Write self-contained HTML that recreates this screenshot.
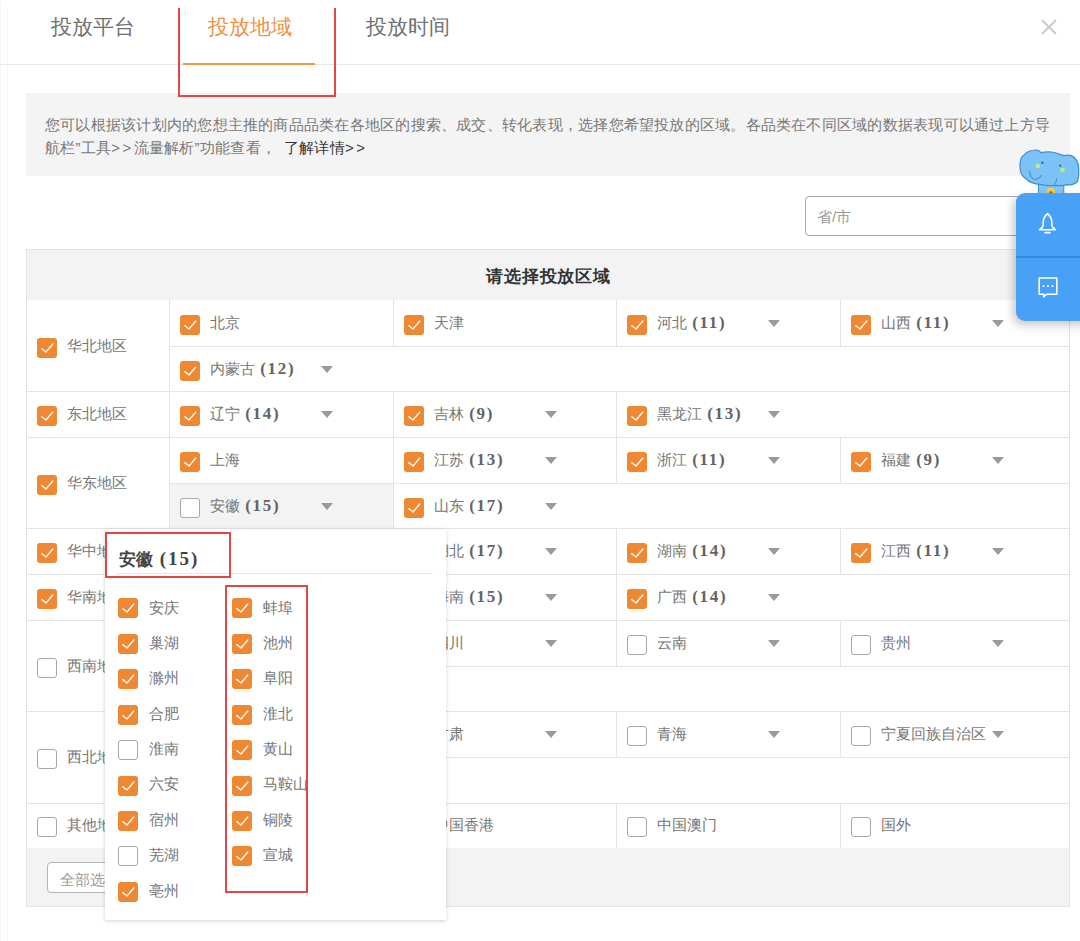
<!DOCTYPE html>
<html><head><meta charset="utf-8">
<style>
*{box-sizing:border-box;margin:0;padding:0}
html,body{width:1080px;height:941px;overflow:hidden;background:#fff}
body{position:relative;font-family:"Liberation Sans",sans-serif;color:#666}
.a{position:absolute}
.tab{position:absolute;top:13px;font-size:21px;line-height:28px;color:#707070;white-space:nowrap}
.hl{position:absolute;background:#e4e4e4;height:1px}
.vl{position:absolute;background:#e4e4e4;width:1px}
.cb{position:absolute;width:20px;height:20px;border-radius:3px;background:#ef8832}
.cb svg{position:absolute;left:0;top:0}
.cb.u{background:#fff;border:1px solid #a8a8a8}
.t{position:absolute;font-size:15px;line-height:20px;color:#767676;white-space:nowrap}
.n{font-family:"Liberation Serif",serif;font-weight:bold;color:#646464;font-size:17px;letter-spacing:1.7px;margin-left:1px}
.ar{position:absolute;width:0;height:0;border-left:6px solid transparent;border-right:6px solid transparent;border-top:7px solid #9a9a9a}
.red{position:absolute;border:2px solid #e04848}
</style></head><body>
<div class="vl" style="left:0;top:0;height:941px;background:#f7f7f7"></div>
<div class="vl" style="left:7px;top:8px;height:933px;background:#f6f6f6"></div>
<!-- tabs -->
<div class="tab" style="left:51px">投放平台</div>
<div class="tab" style="left:208px;color:#f0923e">投放地域</div>
<div class="tab" style="left:366px">投放时间</div>
<svg class="a" style="left:1041px;top:19px" width="16" height="16" viewBox="0 0 16 16"><path d="M1 1L15 15M15 1L1 15" stroke="#c9c9c9" stroke-width="1.8"/></svg>
<div class="hl" style="left:0;top:64px;width:1080px;background:#e8e8e8"></div>
<div class="a" style="left:183px;top:62.5px;width:132px;height:2.5px;background:#f0994a"></div>

<!-- info -->
<div class="a" style="left:26px;top:93px;width:1044px;height:83px;background:#f4f4f4"></div>
<div class="a" style="left:45px;top:113px;font-size:15px;line-height:23px;color:#787878;white-space:nowrap;letter-spacing:0.23px">您可以根据该计划内的您想主推的商品品类在各地区的搜索、成交、转化表现，选择您希望投放的区域。各品类在不同区域的数据表现可以通过上方导</div>
<div class="a" style="left:45px;top:136px;font-size:15px;line-height:23px;color:#787878;white-space:nowrap;letter-spacing:0.23px">航栏”工具<span style="letter-spacing:2.5px">&gt;&gt;</span>流量解析”功能查看，</div>
<div class="a" style="left:284px;top:136px;font-size:15px;line-height:23px;color:#333;white-space:nowrap;letter-spacing:0.23px">了解详情<span style="letter-spacing:2.5px">&gt;&gt;</span></div>
<!-- search -->
<div class="a" style="left:805px;top:196px;width:260px;height:40px;border:1px solid #a9a9a9;border-radius:4px;background:#fff"></div>
<div class="a" style="left:817px;top:207px;font-size:15px;line-height:20px;color:#999">省/市</div>

<!-- table -->
<div class="a" style="left:26px;top:249px;width:1044px;height:658px;border:1px solid #e2e2e2;background:#fff"></div>
<div class="a" style="left:27px;top:250px;width:1042px;height:50px;background:#f3f3f3"></div>
<div class="a" style="left:26px;top:266px;width:1043px;text-align:center;font-size:17px;line-height:22px;font-weight:bold;color:#333;letter-spacing:0.9px;padding-left:2px">请选择投放区域</div>
<div class="a" style="left:27px;top:848px;width:1042px;height:58px;background:#f3f3f3"></div>
<div class="a" style="left:170px;top:484px;width:223px;height:44px;background:#f3f3f3"></div>
<div class="hl" style="left:26px;top:391px;width:1043px"></div>
<div class="cb" style="left:37px;top:338px"><svg width="20" height="20" viewBox="0 0 20 20"><path d="M4.8 10.6L9 14L15.8 6" fill="none" stroke="#fff4ea" stroke-width="1.5" stroke-linecap="round" stroke-linejoin="round"/></svg></div>
<div class="t" style="left:67px;top:336px">华北地区</div>
<div class="vl" style="left:169px;top:300px;height:91px"></div>
<div class="hl" style="left:169px;top:346px;width:900px"></div>
<div class="vl" style="left:393px;top:300px;height:46px"></div>
<div class="vl" style="left:616px;top:300px;height:46px"></div>
<div class="vl" style="left:840px;top:300px;height:46px"></div>
<div class="cb" style="left:180px;top:315px"><svg width="20" height="20" viewBox="0 0 20 20"><path d="M4.8 10.6L9 14L15.8 6" fill="none" stroke="#fff4ea" stroke-width="1.5" stroke-linecap="round" stroke-linejoin="round"/></svg></div>
<div class="t" style="left:210px;top:313px">北京</div>
<div class="cb" style="left:404px;top:315px"><svg width="20" height="20" viewBox="0 0 20 20"><path d="M4.8 10.6L9 14L15.8 6" fill="none" stroke="#fff4ea" stroke-width="1.5" stroke-linecap="round" stroke-linejoin="round"/></svg></div>
<div class="t" style="left:434px;top:313px">天津</div>
<div class="cb" style="left:627px;top:315px"><svg width="20" height="20" viewBox="0 0 20 20"><path d="M4.8 10.6L9 14L15.8 6" fill="none" stroke="#fff4ea" stroke-width="1.5" stroke-linecap="round" stroke-linejoin="round"/></svg></div>
<div class="t" style="left:657px;top:313px">河北 <span class="n">(11)</span></div>
<div class="ar" style="left:768px;top:320px"></div>
<div class="cb" style="left:851px;top:315px"><svg width="20" height="20" viewBox="0 0 20 20"><path d="M4.8 10.6L9 14L15.8 6" fill="none" stroke="#fff4ea" stroke-width="1.5" stroke-linecap="round" stroke-linejoin="round"/></svg></div>
<div class="t" style="left:881px;top:313px">山西 <span class="n">(11)</span></div>
<div class="ar" style="left:992px;top:320px"></div>
<div class="cb" style="left:180px;top:361px"><svg width="20" height="20" viewBox="0 0 20 20"><path d="M4.8 10.6L9 14L15.8 6" fill="none" stroke="#fff4ea" stroke-width="1.5" stroke-linecap="round" stroke-linejoin="round"/></svg></div>
<div class="t" style="left:210px;top:359px">内蒙古 <span class="n">(12)</span></div>
<div class="ar" style="left:321px;top:366px"></div>
<div class="hl" style="left:26px;top:437px;width:1043px"></div>
<div class="cb" style="left:37px;top:406px"><svg width="20" height="20" viewBox="0 0 20 20"><path d="M4.8 10.6L9 14L15.8 6" fill="none" stroke="#fff4ea" stroke-width="1.5" stroke-linecap="round" stroke-linejoin="round"/></svg></div>
<div class="t" style="left:67px;top:404px">东北地区</div>
<div class="vl" style="left:169px;top:391px;height:46px"></div>
<div class="vl" style="left:393px;top:391px;height:46px"></div>
<div class="vl" style="left:616px;top:391px;height:46px"></div>
<div class="cb" style="left:180px;top:406px"><svg width="20" height="20" viewBox="0 0 20 20"><path d="M4.8 10.6L9 14L15.8 6" fill="none" stroke="#fff4ea" stroke-width="1.5" stroke-linecap="round" stroke-linejoin="round"/></svg></div>
<div class="t" style="left:210px;top:404px">辽宁 <span class="n">(14)</span></div>
<div class="ar" style="left:321px;top:411px"></div>
<div class="cb" style="left:404px;top:406px"><svg width="20" height="20" viewBox="0 0 20 20"><path d="M4.8 10.6L9 14L15.8 6" fill="none" stroke="#fff4ea" stroke-width="1.5" stroke-linecap="round" stroke-linejoin="round"/></svg></div>
<div class="t" style="left:434px;top:404px">吉林 <span class="n">(9)</span></div>
<div class="ar" style="left:545px;top:411px"></div>
<div class="cb" style="left:627px;top:406px"><svg width="20" height="20" viewBox="0 0 20 20"><path d="M4.8 10.6L9 14L15.8 6" fill="none" stroke="#fff4ea" stroke-width="1.5" stroke-linecap="round" stroke-linejoin="round"/></svg></div>
<div class="t" style="left:657px;top:404px">黑龙江 <span class="n">(13)</span></div>
<div class="ar" style="left:768px;top:411px"></div>
<div class="hl" style="left:26px;top:528px;width:1043px"></div>
<div class="cb" style="left:37px;top:475px"><svg width="20" height="20" viewBox="0 0 20 20"><path d="M4.8 10.6L9 14L15.8 6" fill="none" stroke="#fff4ea" stroke-width="1.5" stroke-linecap="round" stroke-linejoin="round"/></svg></div>
<div class="t" style="left:67px;top:473px">华东地区</div>
<div class="vl" style="left:169px;top:437px;height:91px"></div>
<div class="hl" style="left:169px;top:483px;width:900px"></div>
<div class="vl" style="left:393px;top:437px;height:46px"></div>
<div class="vl" style="left:616px;top:437px;height:46px"></div>
<div class="vl" style="left:840px;top:437px;height:46px"></div>
<div class="vl" style="left:393px;top:483px;height:45px"></div>
<div class="cb" style="left:180px;top:452px"><svg width="20" height="20" viewBox="0 0 20 20"><path d="M4.8 10.6L9 14L15.8 6" fill="none" stroke="#fff4ea" stroke-width="1.5" stroke-linecap="round" stroke-linejoin="round"/></svg></div>
<div class="t" style="left:210px;top:450px">上海</div>
<div class="cb" style="left:404px;top:452px"><svg width="20" height="20" viewBox="0 0 20 20"><path d="M4.8 10.6L9 14L15.8 6" fill="none" stroke="#fff4ea" stroke-width="1.5" stroke-linecap="round" stroke-linejoin="round"/></svg></div>
<div class="t" style="left:434px;top:450px">江苏 <span class="n">(13)</span></div>
<div class="ar" style="left:545px;top:457px"></div>
<div class="cb" style="left:627px;top:452px"><svg width="20" height="20" viewBox="0 0 20 20"><path d="M4.8 10.6L9 14L15.8 6" fill="none" stroke="#fff4ea" stroke-width="1.5" stroke-linecap="round" stroke-linejoin="round"/></svg></div>
<div class="t" style="left:657px;top:450px">浙江 <span class="n">(11)</span></div>
<div class="ar" style="left:768px;top:457px"></div>
<div class="cb" style="left:851px;top:452px"><svg width="20" height="20" viewBox="0 0 20 20"><path d="M4.8 10.6L9 14L15.8 6" fill="none" stroke="#fff4ea" stroke-width="1.5" stroke-linecap="round" stroke-linejoin="round"/></svg></div>
<div class="t" style="left:881px;top:450px">福建 <span class="n">(9)</span></div>
<div class="ar" style="left:992px;top:457px"></div>
<div class="cb u" style="left:180px;top:498px"></div>
<div class="t" style="left:210px;top:496px">安徽 <span class="n">(15)</span></div>
<div class="ar" style="left:321px;top:503px"></div>
<div class="cb" style="left:404px;top:498px"><svg width="20" height="20" viewBox="0 0 20 20"><path d="M4.8 10.6L9 14L15.8 6" fill="none" stroke="#fff4ea" stroke-width="1.5" stroke-linecap="round" stroke-linejoin="round"/></svg></div>
<div class="t" style="left:434px;top:496px">山东 <span class="n">(17)</span></div>
<div class="ar" style="left:545px;top:503px"></div>
<div class="hl" style="left:26px;top:574px;width:1043px"></div>
<div class="cb" style="left:37px;top:543px"><svg width="20" height="20" viewBox="0 0 20 20"><path d="M4.8 10.6L9 14L15.8 6" fill="none" stroke="#fff4ea" stroke-width="1.5" stroke-linecap="round" stroke-linejoin="round"/></svg></div>
<div class="t" style="left:67px;top:541px">华中地区</div>
<div class="vl" style="left:169px;top:528px;height:46px"></div>
<div class="vl" style="left:393px;top:528px;height:46px"></div>
<div class="vl" style="left:616px;top:528px;height:46px"></div>
<div class="vl" style="left:840px;top:528px;height:46px"></div>
<div class="cb" style="left:404px;top:543px"><svg width="20" height="20" viewBox="0 0 20 20"><path d="M4.8 10.6L9 14L15.8 6" fill="none" stroke="#fff4ea" stroke-width="1.5" stroke-linecap="round" stroke-linejoin="round"/></svg></div>
<div class="t" style="left:434px;top:541px">湖北 <span class="n">(17)</span></div>
<div class="ar" style="left:545px;top:548px"></div>
<div class="cb" style="left:627px;top:543px"><svg width="20" height="20" viewBox="0 0 20 20"><path d="M4.8 10.6L9 14L15.8 6" fill="none" stroke="#fff4ea" stroke-width="1.5" stroke-linecap="round" stroke-linejoin="round"/></svg></div>
<div class="t" style="left:657px;top:541px">湖南 <span class="n">(14)</span></div>
<div class="ar" style="left:768px;top:548px"></div>
<div class="cb" style="left:851px;top:543px"><svg width="20" height="20" viewBox="0 0 20 20"><path d="M4.8 10.6L9 14L15.8 6" fill="none" stroke="#fff4ea" stroke-width="1.5" stroke-linecap="round" stroke-linejoin="round"/></svg></div>
<div class="t" style="left:881px;top:541px">江西 <span class="n">(11)</span></div>
<div class="ar" style="left:992px;top:548px"></div>
<div class="hl" style="left:26px;top:620px;width:1043px"></div>
<div class="cb" style="left:37px;top:589px"><svg width="20" height="20" viewBox="0 0 20 20"><path d="M4.8 10.6L9 14L15.8 6" fill="none" stroke="#fff4ea" stroke-width="1.5" stroke-linecap="round" stroke-linejoin="round"/></svg></div>
<div class="t" style="left:67px;top:587px">华南地区</div>
<div class="vl" style="left:169px;top:574px;height:46px"></div>
<div class="vl" style="left:393px;top:574px;height:46px"></div>
<div class="vl" style="left:616px;top:574px;height:46px"></div>
<div class="cb" style="left:404px;top:589px"><svg width="20" height="20" viewBox="0 0 20 20"><path d="M4.8 10.6L9 14L15.8 6" fill="none" stroke="#fff4ea" stroke-width="1.5" stroke-linecap="round" stroke-linejoin="round"/></svg></div>
<div class="t" style="left:434px;top:587px">海南 <span class="n">(15)</span></div>
<div class="ar" style="left:545px;top:594px"></div>
<div class="cb" style="left:627px;top:589px"><svg width="20" height="20" viewBox="0 0 20 20"><path d="M4.8 10.6L9 14L15.8 6" fill="none" stroke="#fff4ea" stroke-width="1.5" stroke-linecap="round" stroke-linejoin="round"/></svg></div>
<div class="t" style="left:657px;top:587px">广西 <span class="n">(14)</span></div>
<div class="ar" style="left:768px;top:594px"></div>
<div class="hl" style="left:26px;top:711px;width:1043px"></div>
<div class="cb u" style="left:37px;top:658px"></div>
<div class="t" style="left:67px;top:656px">西南地区</div>
<div class="vl" style="left:169px;top:620px;height:91px"></div>
<div class="hl" style="left:169px;top:666px;width:900px"></div>
<div class="vl" style="left:393px;top:620px;height:46px"></div>
<div class="vl" style="left:616px;top:620px;height:46px"></div>
<div class="vl" style="left:840px;top:620px;height:46px"></div>
<div class="cb u" style="left:404px;top:635px"></div>
<div class="t" style="left:434px;top:633px">四川</div>
<div class="ar" style="left:545px;top:640px"></div>
<div class="cb u" style="left:627px;top:635px"></div>
<div class="t" style="left:657px;top:633px">云南</div>
<div class="ar" style="left:768px;top:640px"></div>
<div class="cb u" style="left:851px;top:635px"></div>
<div class="t" style="left:881px;top:633px">贵州</div>
<div class="ar" style="left:992px;top:640px"></div>
<div class="hl" style="left:26px;top:803px;width:1043px"></div>
<div class="cb u" style="left:37px;top:749px"></div>
<div class="t" style="left:67px;top:747px">西北地区</div>
<div class="vl" style="left:169px;top:711px;height:92px"></div>
<div class="hl" style="left:169px;top:757px;width:900px"></div>
<div class="vl" style="left:393px;top:711px;height:46px"></div>
<div class="vl" style="left:616px;top:711px;height:46px"></div>
<div class="vl" style="left:840px;top:711px;height:46px"></div>
<div class="cb u" style="left:404px;top:726px"></div>
<div class="t" style="left:434px;top:724px">甘肃</div>
<div class="ar" style="left:545px;top:731px"></div>
<div class="cb u" style="left:627px;top:726px"></div>
<div class="t" style="left:657px;top:724px">青海</div>
<div class="ar" style="left:768px;top:731px"></div>
<div class="cb u" style="left:851px;top:726px"></div>
<div class="t" style="left:881px;top:724px">宁夏回族自治区</div>
<div class="ar" style="left:992px;top:731px"></div>
<div class="cb u" style="left:37px;top:817px"></div>
<div class="t" style="left:67px;top:815px">其他地区</div>
<div class="vl" style="left:169px;top:803px;height:45px"></div>
<div class="vl" style="left:393px;top:803px;height:45px"></div>
<div class="vl" style="left:616px;top:803px;height:45px"></div>
<div class="vl" style="left:840px;top:803px;height:45px"></div>
<div class="cb u" style="left:404px;top:817px"></div>
<div class="t" style="left:434px;top:815px">中国香港</div>
<div class="cb u" style="left:627px;top:817px"></div>
<div class="t" style="left:657px;top:815px">中国澳门</div>
<div class="cb u" style="left:851px;top:817px"></div>
<div class="t" style="left:881px;top:815px">国外</div>
<div class="a" style="left:47px;top:862px;width:120px;height:31px;border:1px solid #b5b5b5;border-radius:4px;background:#fff"></div><div class="t" style="left:60px;top:870px;color:#9a9a9a">全部选择</div>
<div class="a" style="left:105px;top:529px;width:341px;height:391px;background:#fff;box-shadow:0 1px 4px rgba(0,0,0,0.18)"></div>
<div class="a" style="left:119px;top:547px;font-size:17px;line-height:24px;font-weight:bold;color:#444;white-space:nowrap">安徽 <span style="font-family:'Liberation Serif',serif;font-size:19px;letter-spacing:2px;margin-left:2px">(15)</span></div>
<div class="hl" style="left:117px;top:573px;width:316px;background:#e6e6e6"></div>
<div class="cb" style="left:118px;top:598px"><svg width="20" height="20" viewBox="0 0 20 20"><path d="M4.8 10.6L9 14L15.8 6" fill="none" stroke="#fff4ea" stroke-width="1.5" stroke-linecap="round" stroke-linejoin="round"/></svg></div>
<div class="t" style="left:149px;top:598px">安庆</div>
<div class="cb" style="left:118px;top:634px"><svg width="20" height="20" viewBox="0 0 20 20"><path d="M4.8 10.6L9 14L15.8 6" fill="none" stroke="#fff4ea" stroke-width="1.5" stroke-linecap="round" stroke-linejoin="round"/></svg></div>
<div class="t" style="left:149px;top:633px">巢湖</div>
<div class="cb" style="left:118px;top:669px"><svg width="20" height="20" viewBox="0 0 20 20"><path d="M4.8 10.6L9 14L15.8 6" fill="none" stroke="#fff4ea" stroke-width="1.5" stroke-linecap="round" stroke-linejoin="round"/></svg></div>
<div class="t" style="left:149px;top:668px">滁州</div>
<div class="cb" style="left:118px;top:705px"><svg width="20" height="20" viewBox="0 0 20 20"><path d="M4.8 10.6L9 14L15.8 6" fill="none" stroke="#fff4ea" stroke-width="1.5" stroke-linecap="round" stroke-linejoin="round"/></svg></div>
<div class="t" style="left:149px;top:704px">合肥</div>
<div class="cb u" style="left:118px;top:740px"></div>
<div class="t" style="left:149px;top:739px">淮南</div>
<div class="cb" style="left:118px;top:776px"><svg width="20" height="20" viewBox="0 0 20 20"><path d="M4.8 10.6L9 14L15.8 6" fill="none" stroke="#fff4ea" stroke-width="1.5" stroke-linecap="round" stroke-linejoin="round"/></svg></div>
<div class="t" style="left:149px;top:774px">六安</div>
<div class="cb" style="left:118px;top:811px"><svg width="20" height="20" viewBox="0 0 20 20"><path d="M4.8 10.6L9 14L15.8 6" fill="none" stroke="#fff4ea" stroke-width="1.5" stroke-linecap="round" stroke-linejoin="round"/></svg></div>
<div class="t" style="left:149px;top:810px">宿州</div>
<div class="cb u" style="left:118px;top:846px"></div>
<div class="t" style="left:149px;top:845px">芜湖</div>
<div class="cb" style="left:118px;top:882px"><svg width="20" height="20" viewBox="0 0 20 20"><path d="M4.8 10.6L9 14L15.8 6" fill="none" stroke="#fff4ea" stroke-width="1.5" stroke-linecap="round" stroke-linejoin="round"/></svg></div>
<div class="t" style="left:149px;top:881px">亳州</div>
<div class="cb" style="left:232px;top:598px"><svg width="20" height="20" viewBox="0 0 20 20"><path d="M4.8 10.6L9 14L15.8 6" fill="none" stroke="#fff4ea" stroke-width="1.5" stroke-linecap="round" stroke-linejoin="round"/></svg></div>
<div class="t" style="left:263px;top:598px">蚌埠</div>
<div class="cb" style="left:232px;top:634px"><svg width="20" height="20" viewBox="0 0 20 20"><path d="M4.8 10.6L9 14L15.8 6" fill="none" stroke="#fff4ea" stroke-width="1.5" stroke-linecap="round" stroke-linejoin="round"/></svg></div>
<div class="t" style="left:263px;top:633px">池州</div>
<div class="cb" style="left:232px;top:669px"><svg width="20" height="20" viewBox="0 0 20 20"><path d="M4.8 10.6L9 14L15.8 6" fill="none" stroke="#fff4ea" stroke-width="1.5" stroke-linecap="round" stroke-linejoin="round"/></svg></div>
<div class="t" style="left:263px;top:668px">阜阳</div>
<div class="cb" style="left:232px;top:705px"><svg width="20" height="20" viewBox="0 0 20 20"><path d="M4.8 10.6L9 14L15.8 6" fill="none" stroke="#fff4ea" stroke-width="1.5" stroke-linecap="round" stroke-linejoin="round"/></svg></div>
<div class="t" style="left:263px;top:704px">淮北</div>
<div class="cb" style="left:232px;top:740px"><svg width="20" height="20" viewBox="0 0 20 20"><path d="M4.8 10.6L9 14L15.8 6" fill="none" stroke="#fff4ea" stroke-width="1.5" stroke-linecap="round" stroke-linejoin="round"/></svg></div>
<div class="t" style="left:263px;top:739px">黄山</div>
<div class="cb" style="left:232px;top:776px"><svg width="20" height="20" viewBox="0 0 20 20"><path d="M4.8 10.6L9 14L15.8 6" fill="none" stroke="#fff4ea" stroke-width="1.5" stroke-linecap="round" stroke-linejoin="round"/></svg></div>
<div class="t" style="left:263px;top:774px">马鞍山</div>
<div class="cb" style="left:232px;top:811px"><svg width="20" height="20" viewBox="0 0 20 20"><path d="M4.8 10.6L9 14L15.8 6" fill="none" stroke="#fff4ea" stroke-width="1.5" stroke-linecap="round" stroke-linejoin="round"/></svg></div>
<div class="t" style="left:263px;top:810px">铜陵</div>
<div class="cb" style="left:232px;top:846px"><svg width="20" height="20" viewBox="0 0 20 20"><path d="M4.8 10.6L9 14L15.8 6" fill="none" stroke="#fff4ea" stroke-width="1.5" stroke-linecap="round" stroke-linejoin="round"/></svg></div>
<div class="t" style="left:263px;top:845px">宣城</div>
<div class="a" style="left:178px;top:8px;width:2px;height:89px;background:#e04848"></div>
<div class="a" style="left:334px;top:8px;width:2px;height:89px;background:#e04848"></div>
<div class="a" style="left:178px;top:95px;width:158px;height:2px;background:#e04848"></div>
<div class="red" style="left:105px;top:532px;width:126px;height:46px"></div>
<div class="red" style="left:225px;top:585px;width:83px;height:308px"></div>

<svg class="a" style="left:1016px;top:146px" width="64" height="52" viewBox="0 0 64 52">
 <path d="M22.5 36 L22.5 48 L47.8 48 L47.8 36Z" fill="#82c6f6" stroke="#3a8fd4" stroke-width="1"/>
 <path d="M4 21 C4 15 5 11 7 10 C10 6 15 4 20 4 C22 4 24 5 24.5 6.6 C28 6 32 5.8 35.5 6 C40 6.5 44 8 47.8 9.6 C50 9 53 8.8 55.6 9.6 C60 12 62.5 17 62.7 22 C63 28 62.5 33 61.4 35.5 C59 38 55 39 52 38.7 C48 39.5 44 39.8 39.4 39.4 C34 39.8 29 39.5 25 38.7 C19 38 13 36 10.2 33 C7 31 4 28 4 21Z" fill="#7cc2f5" stroke="#3a8fd4" stroke-width="1.2"/>
 <path d="M13.4 25 C14 30 16 33 18.6 33.2 C21.5 33.4 24 31.5 25.8 29" fill="none" stroke="#3a8fd4" stroke-width="1.1"/>
 <path d="M40.7 32.2 C40.5 35 39.5 37 38 38.5" fill="none" stroke="#3a8fd4" stroke-width="1"/>
 <circle cx="26.4" cy="16.7" r="1.2" fill="#2e6aa8"/><circle cx="44.2" cy="19.6" r="1.2" fill="#2e6aa8"/>
 <circle cx="21.9" cy="19.9" r="2.4" fill="#b9eb8a"/><circle cx="46.5" cy="24.1" r="2.4" fill="#b9eb8a"/>
 <circle cx="34.8" cy="46" r="4.2" fill="#f5d33a"/><circle cx="34.8" cy="46.5" r="1.6" fill="#d2562a"/>
</svg>
<div class="a" style="left:1016px;top:193px;width:80px;height:128px;border-radius:9px;background:#48a0f7;box-shadow:-3px 4px 10px rgba(0,0,0,0.22)"></div>
<div class="a" style="left:1016px;top:256px;width:64px;height:2px;background:#3489e0"></div>
<svg class="a" style="left:1038px;top:212px" width="20" height="22" viewBox="0 0 20 22"><path d="M9.5 1.6 C8 3 5.6 5 5.3 9 L5.1 13.3 C4.9 15.4 3.2 16.8 1.6 17.8 H17.4 C15.8 16.8 14.1 15.4 13.9 13.3 L13.7 9 C13.4 5 11 3 9.5 1.6Z" fill="none" stroke="#fff" stroke-width="1.6" stroke-linejoin="round"/><path d="M7 20.6 H12" stroke="#fff" stroke-width="1.6" stroke-linecap="round"/></svg>
<svg class="a" style="left:1038px;top:276px" width="20" height="22" viewBox="0 0 20 22"><path d="M1.2 2 H18.8 V18.2 H8.6 L5.8 21 V18.2 H1.2Z" fill="none" stroke="#fff" stroke-width="1.6" stroke-linejoin="round"/><circle cx="5.5" cy="10" r="1.1" fill="#fff"/><circle cx="10" cy="10" r="1.1" fill="#fff"/><circle cx="14.5" cy="10" r="1.1" fill="#fff"/></svg>


</body></html>
